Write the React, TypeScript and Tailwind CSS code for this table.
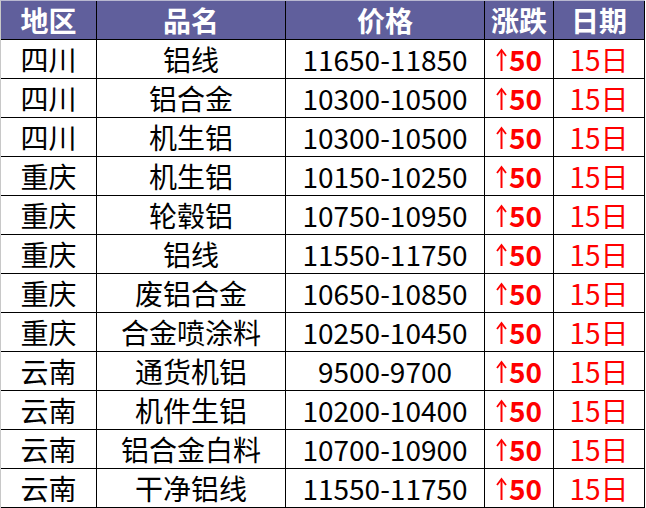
import React from "react";

const rows: [string, string, string][] = [
  ["四川", "铝线", "11650-11850"],
  ["四川", "铝合金", "10300-10500"],
  ["四川", "机生铝", "10300-10500"],
  ["重庆", "机生铝", "10150-10250"],
  ["重庆", "轮毂铝", "10750-10950"],
  ["重庆", "铝线", "11550-11750"],
  ["重庆", "废铝合金", "10650-10850"],
  ["重庆", "合金喷涂料", "10250-10450"],
  ["云南", "通货机铝", "9500-9700"],
  ["云南", "机件生铝", "10200-10400"],
  ["云南", "铝合金白料", "10700-10900"],
  ["云南", "干净铝线", "11550-11750"],
];

const font = { fontFamily: '"Noto Sans CJK SC", "Noto Sans", sans-serif' };

function Arrow() {
  return (
    <svg width="11" height="24" viewBox="0 0 11 24" className="mr-[2px] mt-[1px]">
      <path d="M5.5 3 L5.5 23" stroke="#ff0000" strokeWidth="2" fill="none" />
      <path d="M1 8 L5.5 2 L10 8" stroke="#ff0000" strokeWidth="1.8" fill="none" strokeLinejoin="miter" />
    </svg>
  );
}

export default function App() {
  return (
    <div className="w-[646px] h-[508px] bg-white overflow-hidden" style={font}>
      <div className="w-[645px] border-l border-l-[#c8c8c8] border-t border-t-[#b8b8d0]">
        <div className="flex h-[39px] bg-[#605f9c] border-b border-black text-white font-bold text-[28px] leading-none">
          <div className="w-[96px] border-r border-black flex items-center justify-center">地区</div>
          <div className="w-[189px] border-r border-black flex items-center justify-center">品名</div>
          <div className="w-[199px] border-r border-black flex items-center justify-center">价格</div>
          <div className="w-[69px] border-r border-black flex items-center justify-center">涨跌</div>
          <div className="w-[91px] border-r border-black flex items-center justify-center">日期</div>
        </div>
        {rows.map(([a, b, c], i) => (
          <div key={i} className="flex h-[39px] border-b border-black text-[28px] leading-none text-black">
            <div className="w-[96px] border-r border-black flex items-center justify-center">{a}</div>
            <div className="w-[189px] border-r border-black flex items-center justify-center">{b}</div>
            <div className="w-[199px] border-r border-black flex items-center justify-center">{c}</div>
            <div className="w-[69px] border-r border-black flex items-center justify-center text-[#ff0000]">
              <Arrow />
              <span className="font-bold">50</span>
            </div>
            <div className="w-[91px] border-r border-black flex items-center justify-center text-[#ff0000]">15日</div>
          </div>
        ))}
      </div>
    </div>
  );
}
